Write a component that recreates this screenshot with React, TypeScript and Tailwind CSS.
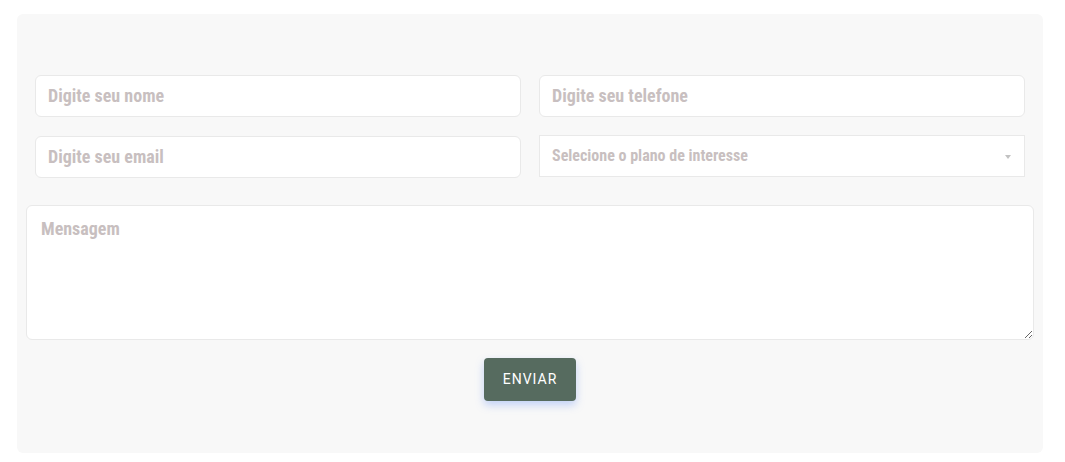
import React from 'react';

const field =
  'h-[42px] w-full rounded-md border border-[#e9e9e9] bg-white px-3 pb-[2px] text-[18px] font-bold font-stretch-semi-condensed text-[#c8bfc0] placeholder:text-[#c8bfc0] outline-none';

export default function App() {
  return (
    <div className="min-h-screen bg-white pt-[14px] pl-[17px]" style={{ fontFamily: 'Roboto, sans-serif' }}>
      <form className="w-[1026px] h-[439px] rounded-md bg-[#f8f8f8] px-[9px] pt-[61px]">
        <div className="grid grid-cols-2 gap-x-[18px] gap-y-[19px] px-[9px]">
          <input className={field} placeholder="Digite seu nome" />
          <input className={field} placeholder="Digite seu telefone" />
          <input className={field} placeholder="Digite seu email" />
          <div className="relative -mt-[1px] h-[42px] border border-[#e9e9e9] bg-white">
            <select className="h-full w-full appearance-none bg-transparent px-3 text-[16px] font-bold font-stretch-semi-condensed text-[#c8bfc0] outline-none">
              <option>Selecione o plano de interesse</option>
            </select>
            <svg className="pointer-events-none absolute right-[13px] top-[19px]" width="6" height="4" viewBox="0 0 6 4">
              <path d="M0 0 L6 0 L3 4 Z" fill="#c2c2c2" />
            </svg>
          </div>
        </div>
        <textarea
          className="mt-[27px] block h-[135px] w-full rounded-md border border-[#e9e9e9] bg-white px-[14px] pt-[9px] text-[18px] font-bold font-stretch-semi-condensed text-[#c8bfc0] placeholder:text-[#c8bfc0] outline-none"
          placeholder="Mensagem"
        />
        <div className="mt-[18px] flex justify-center">
          <button
            type="button"
            className="h-[43px] w-[92px] rounded bg-[#566b5f] text-[14px] tracking-[1px] text-white shadow-[0_4px_8px_rgba(110,150,245,0.4)]"
          >
            ENVIAR
          </button>
        </div>
      </form>
    </div>
  );
}
